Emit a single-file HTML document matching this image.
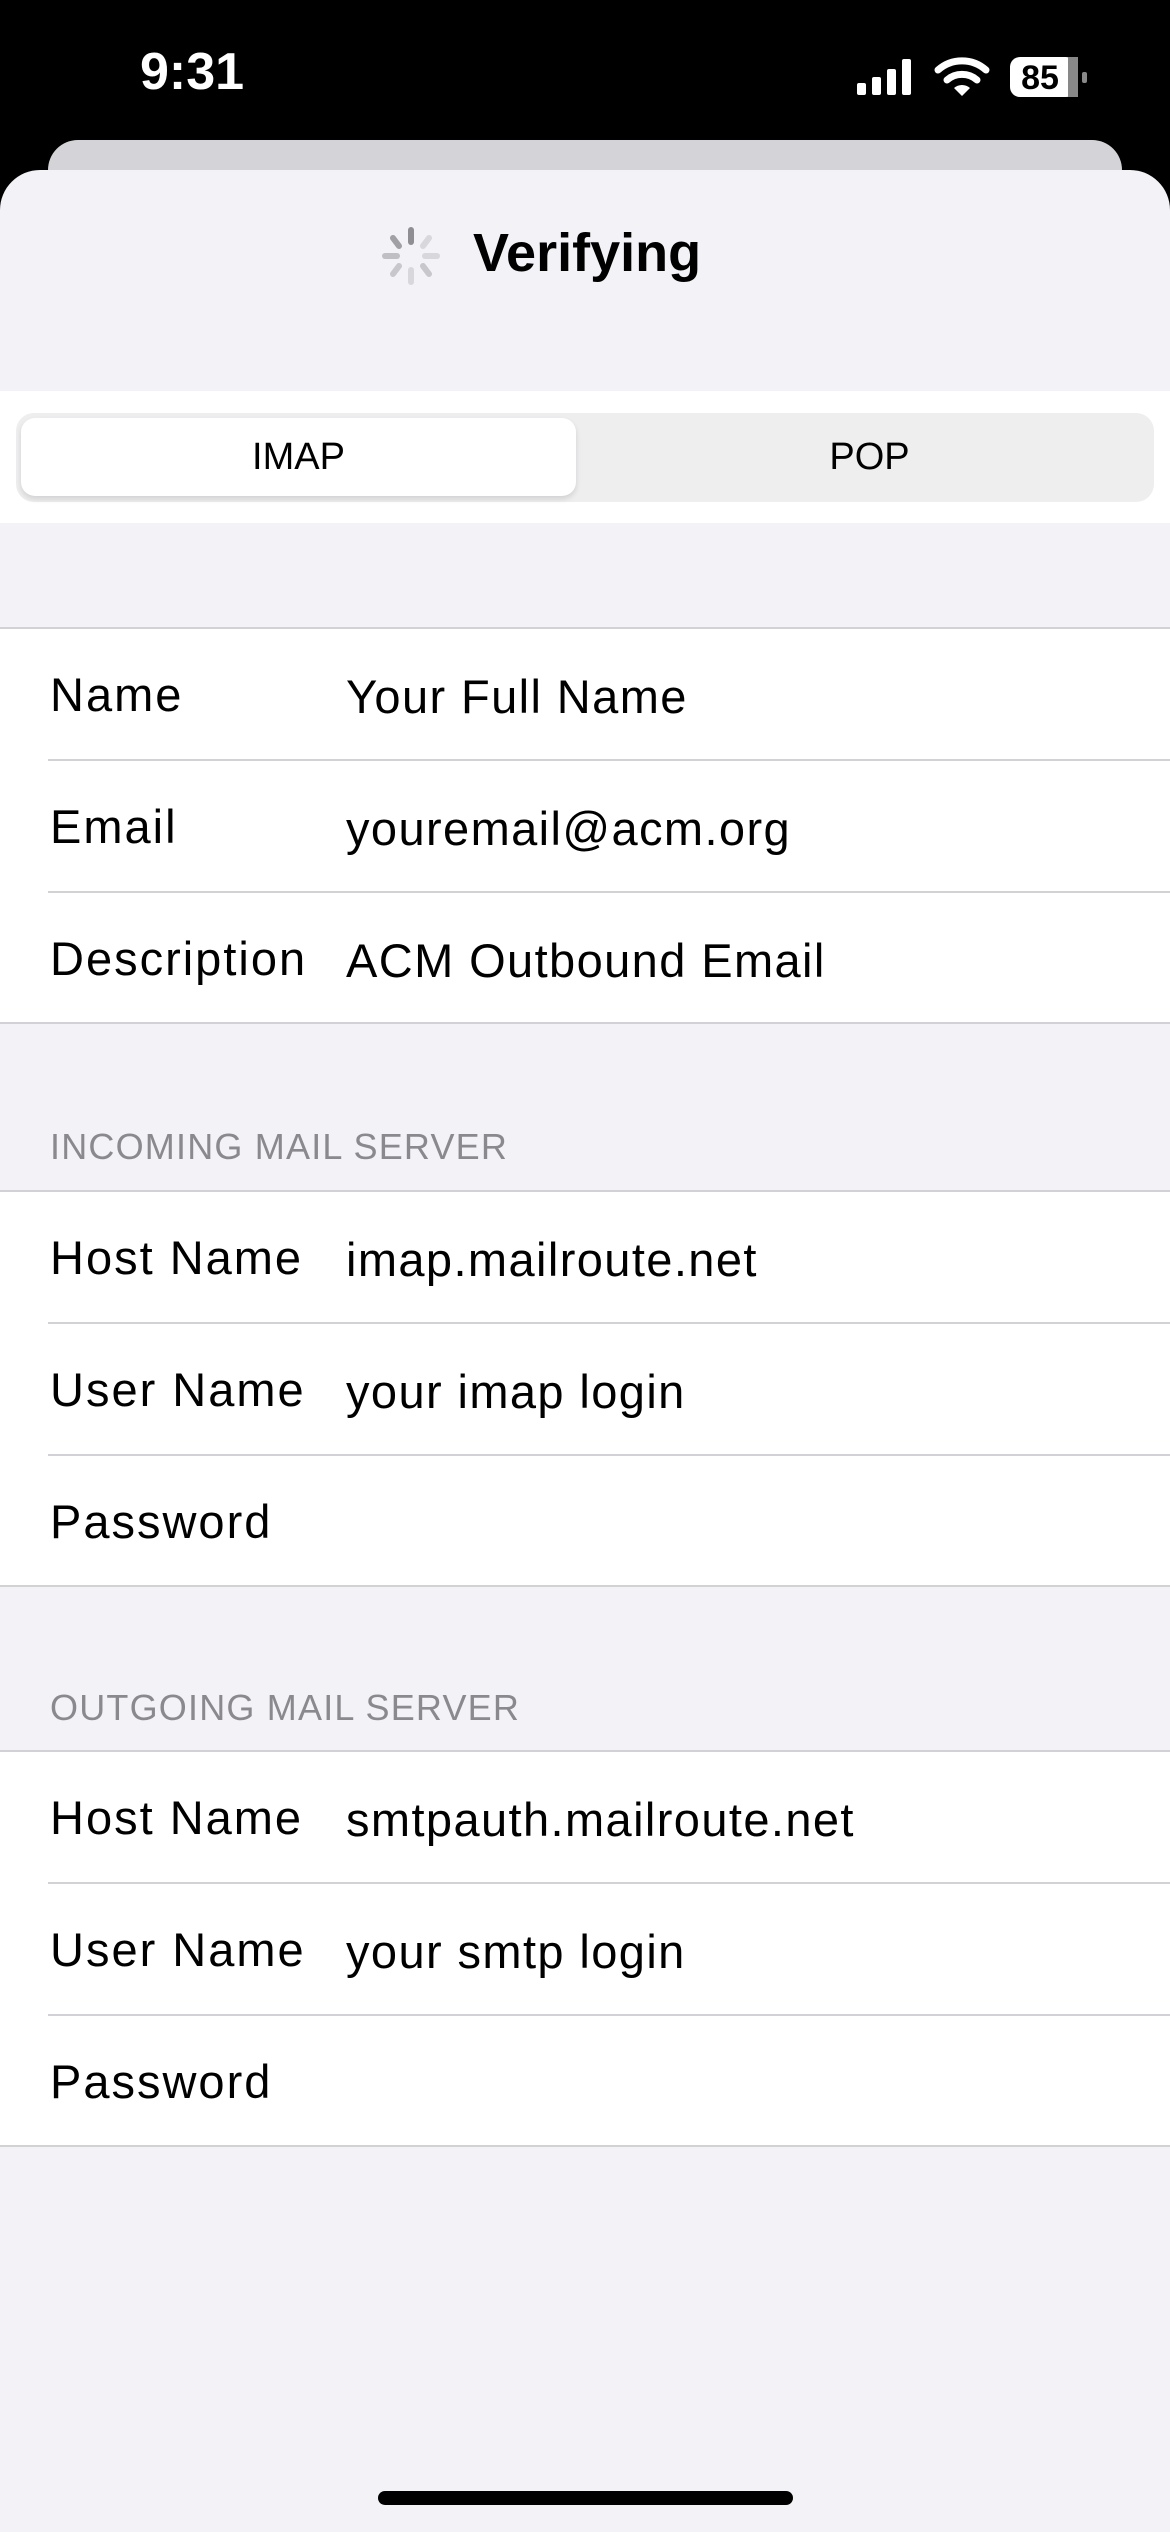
<!DOCTYPE html>
<html><head><meta charset="utf-8"><style>
*{margin:0;padding:0;box-sizing:border-box}
body{width:1170px;height:2532px;background:#000;position:relative;overflow:hidden;font-family:"Liberation Sans",sans-serif}
.abs{position:absolute}
.sheet{left:0;top:170px;width:1170px;height:2362px;background:#f2f2f7;border-radius:40px 40px 0 0}
.row{position:absolute;left:0;width:1170px;height:132px;background:#fff}
.lbl{position:absolute;left:50px;top:0;line-height:132px;font-size:47px;color:#000;letter-spacing:2px}
.val{position:absolute;left:346px;top:2px;line-height:132px;font-size:47px;color:#000;letter-spacing:1.4px}
.sep{position:absolute;left:48px;right:0;height:2px;background:#d1d1d6}
.full{position:absolute;left:0;right:0;height:2px;background:#d1d1d6}
.hdr{position:absolute;left:50px;font-size:36px;color:#8a8a8e;letter-spacing:1.2px}
</style></head><body>
<div class="abs" style="left:140px;top:42px;font-size:52px;font-weight:bold;color:#fff">9:31</div>
<svg class="abs" style="left:850px;top:50px" width="250" height="55">
<rect x="7" y="33" width="9" height="12" rx="2" fill="#fff"/>
<rect x="22" y="27" width="9" height="18" rx="2" fill="#fff"/>
<rect x="37" y="19" width="9" height="26" rx="2" fill="#fff"/>
<rect x="52" y="9" width="9" height="36" rx="2" fill="#fff"/>
<path d="M88 20 A36 36 0 0 1 136 20" stroke="#fff" stroke-width="7" fill="none" stroke-linecap="round"/>
<path d="M97 30 A23 23 0 0 1 127 30" stroke="#fff" stroke-width="7" fill="none" stroke-linecap="round"/>
<path d="M104 38 L112 46 L120 38 A12 12 0 0 0 104 38Z" fill="#fff"/>
<rect x="160" y="7" width="66" height="40" rx="10" fill="#fff"/>
<rect x="218" y="7" width="10" height="40" fill="#888"/>
<rect x="232" y="22" width="5" height="11" rx="2" fill="#888"/>
<text x="190" y="39" font-size="34" font-weight="bold" text-anchor="middle" fill="#000" font-family="Liberation Sans">85</text>
</svg>
<div class="abs" style="left:48px;top:140px;width:1074px;height:100px;background:#d4d3d8;border-radius:30px 30px 0 0"></div>
<div class="abs sheet"></div>
<svg class="abs" style="left:381px;top:226px" width="60" height="60">
<g stroke-linecap="round" stroke-width="6">
<line x1="30" y1="4" x2="30" y2="16" stroke="#8e8e93"/>
<line x1="48" y1="12" x2="42" y2="20" stroke="#d8d8dc"/>
<line x1="56" y1="30" x2="44" y2="30" stroke="#d8d8dc"/>
<line x1="48" y1="48" x2="42" y2="40" stroke="#c8c8cc"/>
<line x1="30" y1="56" x2="30" y2="44" stroke="#d8d8dc"/>
<line x1="12" y1="48" x2="18" y2="40" stroke="#c8c8cc"/>
<line x1="4" y1="30" x2="16" y2="30" stroke="#c0c0c4"/>
<line x1="12" y1="12" x2="18" y2="20" stroke="#a0a0a5"/>
</g></svg>
<div class="abs" style="left:473px;top:222px;font-size:54px;font-weight:bold;color:#000">Verifying</div>
<div class="abs" style="left:0;top:391px;width:1170px;height:132px;background:#fff"></div>
<div class="abs" style="left:16px;top:413px;width:1138px;height:89px;background:#eeeeef;border-radius:18px"></div>
<div class="abs" style="left:21px;top:418px;width:555px;height:78px;background:#fff;border-radius:14px;box-shadow:0 3px 6px rgba(0,0,0,0.12)"></div>
<div class="abs" style="left:21px;top:418px;width:555px;line-height:78px;text-align:center;font-size:38px">IMAP</div>
<div class="abs" style="left:585px;top:418px;width:569px;line-height:78px;text-align:center;font-size:38px">POP</div>

<div class="full" style="top:627px"></div>
<div class="row" style="top:629px"><div class="lbl">Name</div><div class="val">Your Full Name</div></div>
<div class="row" style="top:761px"><div class="lbl">Email</div><div class="val">youremail@acm.org</div></div>
<div class="row" style="top:893px;height:129px"><div class="lbl">Description</div><div class="val">ACM Outbound Email</div></div>
<div class="sep" style="top:759px"></div><div class="sep" style="top:891px"></div>
<div class="full" style="top:1022px"></div>

<div class="hdr" style="top:1126px">INCOMING MAIL SERVER</div>
<div class="full" style="top:1190px"></div>
<div class="row" style="top:1192px"><div class="lbl">Host Name</div><div class="val">imap.mailroute.net</div></div>
<div class="row" style="top:1324px"><div class="lbl">User Name</div><div class="val">your imap login</div></div>
<div class="row" style="top:1456px;height:129px"><div class="lbl">Password</div></div>
<div class="sep" style="top:1322px"></div><div class="sep" style="top:1454px"></div>
<div class="full" style="top:1585px"></div>

<div class="hdr" style="top:1687px">OUTGOING MAIL SERVER</div>
<div class="full" style="top:1750px"></div>
<div class="row" style="top:1752px"><div class="lbl">Host Name</div><div class="val">smtpauth.mailroute.net</div></div>
<div class="row" style="top:1884px"><div class="lbl">User Name</div><div class="val">your smtp login</div></div>
<div class="row" style="top:2016px;height:129px"><div class="lbl">Password</div></div>
<div class="sep" style="top:1882px"></div><div class="sep" style="top:2014px"></div>
<div class="full" style="top:2145px"></div>

<div class="abs" style="left:378px;top:2491px;width:415px;height:14px;background:#000;border-radius:7px"></div>
</body></html>
